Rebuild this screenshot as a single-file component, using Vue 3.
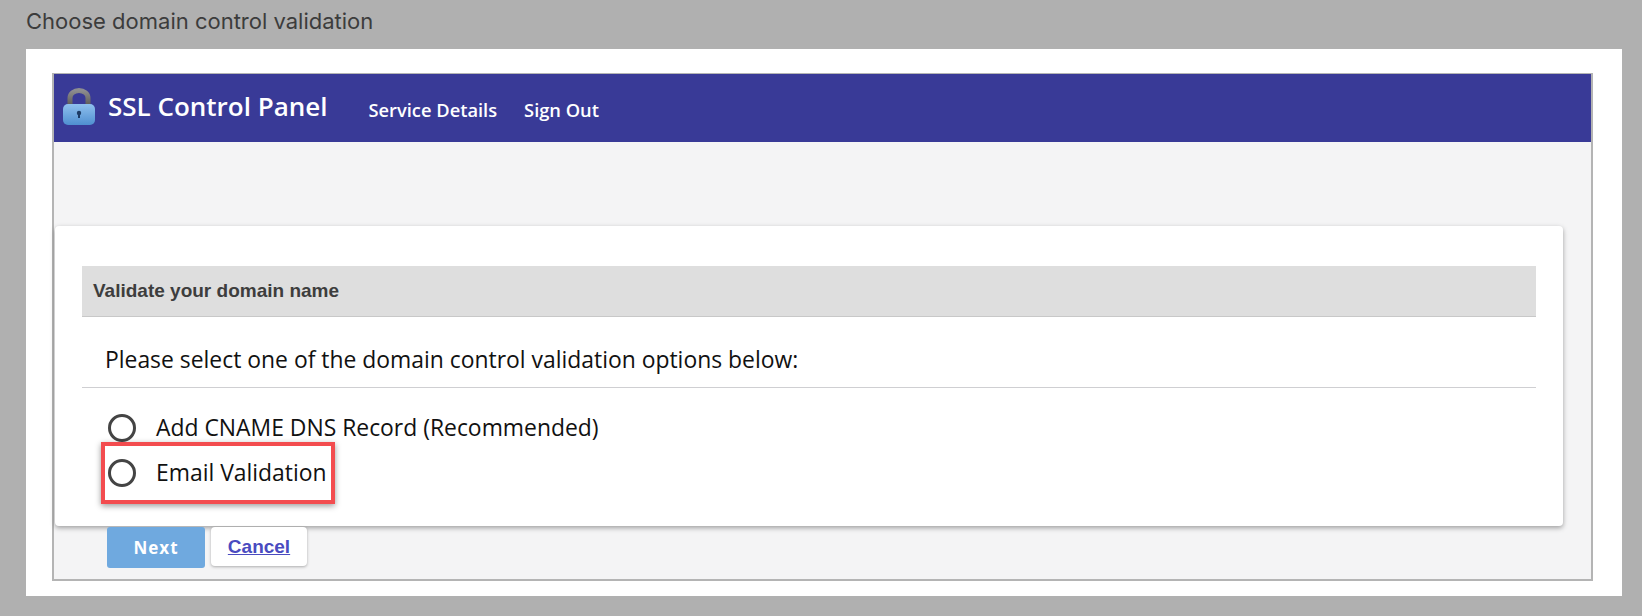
<template>
  <div class="page">
    <div class="caption">Choose domain control validation</div>
    <div class="sheet">
      <div class="frame">
        <header class="topbar">
          <svg class="lock" width="34" height="38" viewBox="0 0 34 38">
            <defs>
              <linearGradient id="lockBody" x1="0" y1="0" x2="0" y2="1">
                <stop offset="0" stop-color="#8fc0ee" />
                <stop offset="1" stop-color="#4f8fd0" />
              </linearGradient>
              <linearGradient id="lockShackle" x1="0" y1="0" x2="0" y2="1">
                <stop offset="0" stop-color="#8d8d90" />
                <stop offset="1" stop-color="#5f5d58" />
              </linearGradient>
            </defs>
            <path d="M8 17V10a9 7.500 0 0 1 18 0v7" fill="none" stroke="url(#lockShackle)" stroke-width="5" />
            <rect x="1" y="16" width="32" height="21" rx="5" fill="url(#lockBody)" />
            <circle cx="17" cy="25" r="2.200" fill="#1d3c66" />
            <rect x="16" y="25" width="2" height="5" fill="#1d3c66" />
          </svg>
          <span class="brand">SSL Control Panel</span>
          <nav class="nav">
            <a>Service Details</a>
            <a>Sign Out</a>
          </nav>
        </header>
        <div class="body">
          <section class="card">
            <h2 class="card-title">Validate your domain name</h2>
            <p class="intro">Please select one of the domain control validation options below:</p>
            <div class="options">
              <label v-for="opt in options" :key="opt" class="option">
                <span class="radio"></span>
                <span>{{ opt }}</span>
              </label>
              <div class="highlight"></div>
            </div>
          </section>
          <div class="actions">
            <button class="next">Next</button>
            <button class="cancel">Cancel</button>
          </div>
        </div>
      </div>
    </div>
  </div>
</template>

<script setup>
const options = ['Add CNAME DNS Record (Recommended)', 'Email Validation']
</script>

<style>
html,
body {
  margin: 0;
  background: #b0b0b0;
}
</style>

<style scoped>
.page {
  width: 1642px;
  height: 616px;
  box-sizing: border-box;
  padding: 0 20px 20px 26px;
  background: #b0b0b0;
  display: flex;
  flex-direction: column;
  overflow: hidden;
}

.caption {
  height: 49px;
  line-height: 43px;
  font-family: Inter, sans-serif;
  font-size: 22px;
  color: #3c3c3c;
}

.sheet {
  flex: 1;
  background: #fff;
  padding: 24px 29px 15px 26px;
  display: flex;
}

.frame {
  flex: 1;
  border: 1px solid #b4b4b4;
  border-width: 1px 2px 2px 2px;
  background: #f4f4f5;
  display: flex;
  flex-direction: column;
}

.topbar {
  height: 68px;
  background: #393a97;
  display: flex;
  align-items: center;
  padding-left: 8px;
  color: #fff;
  font-family: "Open Sans", sans-serif;
}

.lock {
  margin-top: -2px;
  margin-right: 12px;
}

.brand {
  font-size: 26px;
  font-weight: 600;
  margin-right: 41px;
  padding-bottom: 4px;
}

.nav {
  display: flex;
  gap: 27px;
  font-size: 18.300px;
  font-weight: 600;
  padding-top: 2px;
}

.body {
  flex: 1;
  padding: 84px 28px 0 1px;
}

.card {
  background: #fff;
  border-radius: 4px;
  box-shadow: 0 2px 5px rgba(0, 0, 0, 0.35);
  height: 300px;
  box-sizing: border-box;
  padding: 40px 27px 0 27px;
  font-family: "Open Sans", sans-serif;
  color: #111;
}

.card-title {
  margin: 0;
  height: 51px;
  line-height: 49px;
  padding-left: 11px;
  box-sizing: border-box;
  background: #dedede;
  border-bottom: 1px solid #c8c8c8;
  font-family: "Liberation Sans", sans-serif;
  font-size: 19px;
  font-weight: 700;
  color: #3d3d3d;
}

.intro {
  margin: 0;
  height: 71px;
  line-height: 85px;
  padding-left: 23px;
  box-sizing: border-box;
  border-bottom: 1px solid #cfcfd2;
  font-size: 22.900px;
}

.options {
  position: relative;
  padding: 25px 0 0 26px;
  display: flex;
  flex-direction: column;
  gap: 16px;
  font-size: 22.900px;
}

.option {
  display: flex;
  align-items: center;
  gap: 20px;
  height: 29px;
}

.radio {
  width: 28px;
  height: 28px;
  box-sizing: border-box;
  border: 3px solid #444;
  border-radius: 50%;
}

.highlight {
  position: absolute;
  left: 19px;
  top: 54px;
  width: 234px;
  height: 62px;
  box-sizing: border-box;
  border: 4px solid #f34c4f;
  box-shadow: 0 2px 6px rgba(0, 0, 0, 0.4);
}

.actions {
  display: flex;
  align-items: flex-start;
  gap: 6px;
  padding-left: 52px;
  margin-top: 1px;
}

.next {
  width: 98px;
  height: 41px;
  border: none;
  border-radius: 3px;
  background: #6fa9df;
  color: #fff;
  font-family: "Open Sans", sans-serif;
  font-size: 17px;
  font-weight: 700;
  letter-spacing: 1px;
}

.cancel {
  width: 96px;
  height: 39px;
  border: none;
  border-radius: 4px;
  background: #fff;
  box-shadow: 0 1px 3px rgba(0, 0, 0, 0.3);
  color: #4a4bc0;
  font-family: "Liberation Sans", sans-serif;
  font-size: 19px;
  font-weight: 700;
  text-decoration: underline;
}
</style>
